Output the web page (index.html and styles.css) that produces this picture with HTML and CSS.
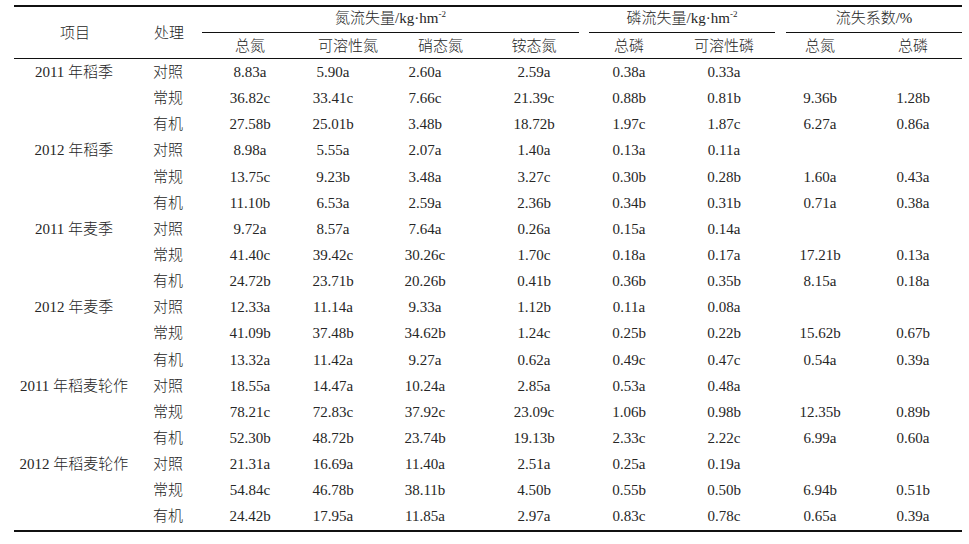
FILE: index.html
```html
<!DOCTYPE html>
<html lang="zh">
<head>
<meta charset="utf-8">
<link rel="stylesheet" href="styles.css">
</head>
<body>
<div class="tbl">
  <div class="c h-span">项目</div>
  <div class="c h-span">处理</div>
  <div class="c grp grp-n">氮流失量/kg·hm<sup>-2</sup></div>
  <div class="c grp grp-p">磷流失量/kg·hm<sup>-2</sup></div>
  <div class="c grp grp-r">流失系数/%</div>

  <div class="c sub">总氮</div>
  <div class="c sub sub-l sub-kr">可溶性氮</div>
  <div class="c sub sub-l sub-xt">硝态氮</div>
  <div class="c sub">铵态氮</div>
  <div class="c sub">总磷</div>
  <div class="c sub">可溶性磷</div>
  <div class="c sub">总氮</div>
  <div class="c sub">总磷</div>

  <div class="c">2011 年稻季</div><div class="c">对照</div><div class="c">8.83a</div><div class="c">5.90a</div><div class="c">2.60a</div><div class="c">2.59a</div><div class="c">0.38a</div><div class="c">0.33a</div><div class="c"></div><div class="c"></div>
  <div class="c"></div><div class="c">常规</div><div class="c">36.82c</div><div class="c">33.41c</div><div class="c">7.66c</div><div class="c">21.39c</div><div class="c">0.88b</div><div class="c">0.81b</div><div class="c">9.36b</div><div class="c">1.28b</div>
  <div class="c"></div><div class="c">有机</div><div class="c">27.58b</div><div class="c">25.01b</div><div class="c">3.48b</div><div class="c">18.72b</div><div class="c">1.97c</div><div class="c">1.87c</div><div class="c">6.27a</div><div class="c">0.86a</div>

  <div class="c">2012 年稻季</div><div class="c">对照</div><div class="c">8.98a</div><div class="c">5.55a</div><div class="c">2.07a</div><div class="c">1.40a</div><div class="c">0.13a</div><div class="c">0.11a</div><div class="c"></div><div class="c"></div>
  <div class="c"></div><div class="c">常规</div><div class="c">13.75c</div><div class="c">9.23b</div><div class="c">3.48a</div><div class="c">3.27c</div><div class="c">0.30b</div><div class="c">0.28b</div><div class="c">1.60a</div><div class="c">0.43a</div>
  <div class="c"></div><div class="c">有机</div><div class="c">11.10b</div><div class="c">6.53a</div><div class="c">2.59a</div><div class="c">2.36b</div><div class="c">0.34b</div><div class="c">0.31b</div><div class="c">0.71a</div><div class="c">0.38a</div>

  <div class="c">2011 年麦季</div><div class="c">对照</div><div class="c">9.72a</div><div class="c">8.57a</div><div class="c">7.64a</div><div class="c">0.26a</div><div class="c">0.15a</div><div class="c">0.14a</div><div class="c"></div><div class="c"></div>
  <div class="c"></div><div class="c">常规</div><div class="c">41.40c</div><div class="c">39.42c</div><div class="c">30.26c</div><div class="c">1.70c</div><div class="c">0.18a</div><div class="c">0.17a</div><div class="c">17.21b</div><div class="c">0.13a</div>
  <div class="c"></div><div class="c">有机</div><div class="c">24.72b</div><div class="c">23.71b</div><div class="c">20.26b</div><div class="c">0.41b</div><div class="c">0.36b</div><div class="c">0.35b</div><div class="c">8.15a</div><div class="c">0.18a</div>

  <div class="c">2012 年麦季</div><div class="c">对照</div><div class="c">12.33a</div><div class="c">11.14a</div><div class="c">9.33a</div><div class="c">1.12b</div><div class="c">0.11a</div><div class="c">0.08a</div><div class="c"></div><div class="c"></div>
  <div class="c"></div><div class="c">常规</div><div class="c">41.09b</div><div class="c">37.48b</div><div class="c">34.62b</div><div class="c">1.24c</div><div class="c">0.25b</div><div class="c">0.22b</div><div class="c">15.62b</div><div class="c">0.67b</div>
  <div class="c"></div><div class="c">有机</div><div class="c">13.32a</div><div class="c">11.42a</div><div class="c">9.27a</div><div class="c">0.62a</div><div class="c">0.49c</div><div class="c">0.47c</div><div class="c">0.54a</div><div class="c">0.39a</div>

  <div class="c">2011 年稻麦轮作</div><div class="c">对照</div><div class="c">18.55a</div><div class="c">14.47a</div><div class="c">10.24a</div><div class="c">2.85a</div><div class="c">0.53a</div><div class="c">0.48a</div><div class="c"></div><div class="c"></div>
  <div class="c"></div><div class="c">常规</div><div class="c">78.21c</div><div class="c">72.83c</div><div class="c">37.92c</div><div class="c">23.09c</div><div class="c">1.06b</div><div class="c">0.98b</div><div class="c">12.35b</div><div class="c">0.89b</div>
  <div class="c"></div><div class="c">有机</div><div class="c">52.30b</div><div class="c">48.72b</div><div class="c">23.74b</div><div class="c">19.13b</div><div class="c">2.33c</div><div class="c">2.22c</div><div class="c">6.99a</div><div class="c">0.60a</div>

  <div class="c">2012 年稻麦轮作</div><div class="c">对照</div><div class="c">21.31a</div><div class="c">16.69a</div><div class="c">11.40a</div><div class="c">2.51a</div><div class="c">0.25a</div><div class="c">0.19a</div><div class="c"></div><div class="c"></div>
  <div class="c"></div><div class="c">常规</div><div class="c">54.84c</div><div class="c">46.78b</div><div class="c">38.11b</div><div class="c">4.50b</div><div class="c">0.55b</div><div class="c">0.50b</div><div class="c">6.94b</div><div class="c">0.51b</div>
  <div class="c"></div><div class="c">有机</div><div class="c">24.42b</div><div class="c">17.95a</div><div class="c">11.85a</div><div class="c">2.97a</div><div class="c">0.83c</div><div class="c">0.78c</div><div class="c">0.65a</div><div class="c">0.39a</div>
</div>
</body>
</html>
```

FILE: styles.css
```css
html, body {
  margin: 0;
  padding: 0;
  background: #ffffff;
}

body {
  font-family: "Liberation Serif", "Noto Sans CJK SC", serif;
  font-size: 15px;
  font-weight: 300;
  color: #262626;
}

.tbl {
  display: grid;
  grid-template-columns: 120px 68px 96px 70px 114px 104px 86px 104px 88px 98px;
  grid-template-rows: 26px 26px;
  grid-auto-rows: 26.15px;
  width: 948px;
  margin: 5px 0 0 14px;
  border-top: 2px solid #111;
  border-bottom: 2px solid #111;
}

.c {
  display: flex;
  align-items: center;
  justify-content: center;
  white-space: nowrap;
  line-height: 1;
  padding-top: 1px;
  box-sizing: border-box;
}

.h-span {
  grid-row: 1 / span 2;
  border-bottom: 1px solid #111;
  padding-top: 2px;
  padding-left: 2px;
}

.grp {
  border-bottom: 1px solid #111;
  padding-bottom: 3px;
}

.grp sup {
  font-size: 9px;
  line-height: 0;
  position: relative;
  top: -5px;
  vertical-align: baseline;
}

.grp-n {
  grid-column: 3 / span 4;
  margin-right: 7px;
}

.grp-p {
  grid-column: 7 / span 2;
  margin-left: 3px;
  margin-right: 1px;
}

.grp-r {
  grid-column: 9 / span 2;
  margin-left: 10px;
}

.sub {
  border-bottom: 1px solid #111;
}

.sub-l {
  justify-content: flex-start;
}

.sub-kr {
  padding-left: 20px;
}

.sub-xt {
  padding-left: 50px;
}
```
